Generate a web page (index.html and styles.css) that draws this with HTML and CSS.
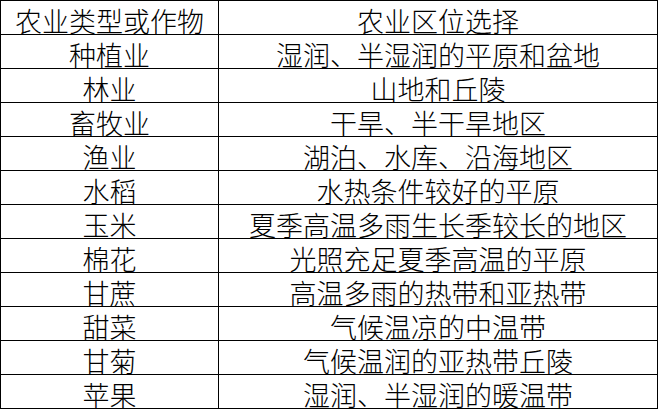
FILE: index.html
```html
<!DOCTYPE html>
<html lang="zh-CN">
<head>
<meta charset="utf-8">
<title>农业区位选择</title>
<link rel="stylesheet" href="styles.css">
</head>
<body>
<div class="table">
  <div class="cell">农业类型或作物</div><div class="cell">农业区位选择</div>
  <div class="cell">种植业</div><div class="cell">湿润、半湿润的平原和盆地</div>
  <div class="cell">林业</div><div class="cell">山地和丘陵</div>
  <div class="cell">畜牧业</div><div class="cell">干旱、半干旱地区</div>
  <div class="cell">渔业</div><div class="cell">湖泊、水库、沿海地区</div>
  <div class="cell">水稻</div><div class="cell">水热条件较好的平原</div>
  <div class="cell">玉米</div><div class="cell">夏季高温多雨生长季较长的地区</div>
  <div class="cell">棉花</div><div class="cell">光照充足夏季高温的平原</div>
  <div class="cell">甘蔗</div><div class="cell">高温多雨的热带和亚热带</div>
  <div class="cell">甜菜</div><div class="cell">气候温凉的中温带</div>
  <div class="cell">甘菊</div><div class="cell">气候温润的亚热带丘陵</div>
  <div class="cell">苹果</div><div class="cell">湿润、半湿润的暖温带</div>
</div>
</body>
</html>
```

FILE: styles.css
```css
html, body {
  margin: 0;
  padding: 0;
  background: #ffffff;
}
.table {
  display: grid;
  grid-template-columns: 218px 439px;
  grid-auto-rows: 34px;
  width: 657px;
  border-top: 1px solid #000;
  border-left: 1px solid #000;
  box-sizing: content-box;
  font-family: "Noto Sans CJK SC", "Noto Sans CJK JP", sans-serif;
  font-weight: 300;
  font-size: 27px;
  color: #000;
}
.cell {
  box-sizing: border-box;
  border-right: 1px solid #000;
  border-bottom: 1px solid #000;
  display: flex;
  align-items: center;
  justify-content: center;
  line-height: 1;
  padding-top: 6px;
  white-space: nowrap;
}
```
